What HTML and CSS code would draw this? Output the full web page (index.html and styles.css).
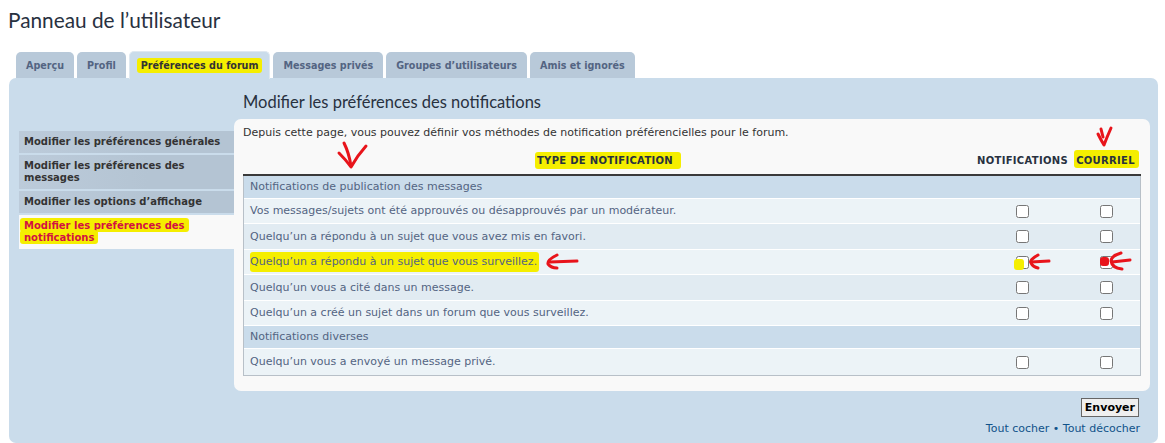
FILE: index.html
```html
<!DOCTYPE html>
<html lang="fr">
<head>
<meta charset="utf-8">
<title>Panneau de l’utilisateur</title>
<link rel="stylesheet" href="styles.css">
</head>
<body>
<h2 class="page-title">Panneau de l’utilisateur</h2>
<div class="tabs">
  <a class="tab">Aperçu</a>
  <a class="tab">Profil</a>
  <a class="tab active"><span class="hl hl-tab">Préférences du forum</span></a>
  <a class="tab">Messages privés</a>
  <a class="tab">Groupes d’utilisateurs</a>
  <a class="tab">Amis et ignorés</a>
</div>
<div class="panel">
  <ul class="nav">
    <li><a>Modifier les préférences générales</a></li>
    <li><a>Modifier les préférences des messages</a></li>
    <li><a>Modifier les options d’affichage</a></li>
    <li class="current"><a><span class="hl hl-nav">Modifier les préférences des notifications</span></a></li>
  </ul>
  <div class="main">
    <h2 class="section-title">Modifier les préférences des notifications</h2>
    <div class="box">
      <p class="intro">Depuis cette page, vous pouvez définir vos méthodes de notification préférencielles pour le forum.</p>
      <table class="table1">
        <thead>
          <tr>
            <th class="col-type"><span class="hl hl-th">TYPE DE NOTIFICATION</span></th>
            <th class="col-notif">NOTIFICATIONS</th>
            <th class="col-mail"><span class="hl hl-mail">COURRIEL</span></th>
          </tr>
        </thead>
        <tbody>
          <tr class="sec"><td colspan="3">Notifications de publication des messages</td></tr>
          <tr class="bg1"><td>Vos messages/sujets ont été approuvés ou désapprouvés par un modérateur.</td><td class="c"><input type="checkbox"></td><td class="c"><input type="checkbox"></td></tr>
          <tr class="bg2"><td>Quelqu’un a répondu à un sujet que vous avez mis en favori.</td><td class="c"><input type="checkbox"></td><td class="c"><input type="checkbox"></td></tr>
          <tr class="bg1"><td><span class="hl hl-row">Quelqu’un a répondu à un sujet que vous surveillez.</span></td><td class="c"><input type="checkbox"></td><td class="c"><input type="checkbox"></td></tr>
          <tr class="bg2"><td>Quelqu’un vous a cité dans un message.</td><td class="c"><input type="checkbox"></td><td class="c"><input type="checkbox"></td></tr>
          <tr class="bg1"><td>Quelqu’un a créé un sujet dans un forum que vous surveillez.</td><td class="c"><input type="checkbox"></td><td class="c"><input type="checkbox"></td></tr>
          <tr class="sec"><td colspan="3">Notifications diverses</td></tr>
          <tr class="bg1 last"><td>Quelqu’un vous a envoyé un message privé.</td><td class="c"><input type="checkbox"></td><td class="c"><input type="checkbox"></td></tr>
        </tbody>
      </table>
    </div>
    <div class="submit-row"><button class="btn" type="button">Envoyer</button></div>
    <div class="links"><a>Tout cocher</a> • <a>Tout décocher</a></div>
  </div>
</div>
<svg class="marks" width="1165" height="443" viewBox="0 0 1165 443">
  <rect class="blob" x="1014" y="259" width="10" height="11" rx="3"/>
  <rect class="dot" x="1100" y="257" width="9" height="9" rx="3"/>
  <g class="arrow">
    <path d="M344 143 Q349 153 351 166"/>
    <path d="M339 153 Q346 160 351 167 Q357 156 366 146"/>
    <path d="M1098 134 Q1101 140 1104 145 Q1107 137 1111 128"/>
    <path d="M1101 129 L1103 137"/>
    <path d="M577 261 L550 262"/>
    <path d="M557 255 Q547 260 548 264 Q551 268 557 268"/>
    <path d="M1049 261 L1031 262"/>
    <path d="M1038 255 Q1029 260 1031 263 Q1033 267 1038 268"/>
    <path d="M1130 260 L1112 262"/>
    <path d="M1121 253 Q1111 256 1111 261 Q1112 268 1122 269"/>
  </g>
</svg>
</body>
</html>
```
FILE: styles.css
```css
* { box-sizing: border-box; }
html, body { margin: 0; padding: 0; }
body {
  position: relative;
  width: 1165px;
  height: 443px;
  overflow: hidden;
  background: #ffffff;
  font-family: "DejaVu Sans", Verdana, sans-serif;
  color: #333333;
}
.page-title {
  margin: 0;
  padding: 8px 8px 0;
  font: normal 20.8px/24px Lato, "DejaVu Sans", sans-serif;
  color: #28313f;
}
.tabs {
  display: flex;
  align-items: flex-end;
  gap: 3px;
  height: 26px;
  margin-top: 20px;
  padding-left: 16px;
}
.tab {
  position: relative;
  display: block;
  height: 26px;
  padding: 0 10px;
  background: #b8c9d9;
  border-radius: 5px 5px 0 0;
  font: bold 9.6px/28px "DejaVu Sans", sans-serif;
  color: #536482;
  white-space: nowrap;
}
.tab.active {
  z-index: 1;
  height: 28px;
  margin-bottom: -1px;
  background: #cadceb;
  border: 1px solid #dfe8f0;
  border-bottom: 0;
  color: #333333;
  padding: 0 7px;
  line-height: 27px;
}
.hl {
  background: #f5ee00;
  border-radius: 3px;
}
.hl-tab { padding: 2px 4px; }
.hl-th { padding: 3px 8px 3px 2px; }
.hl-mail { padding: 5px 4px 2px 2px; }
.hl-row { padding: 3px 2px 4px 0; }
.hl-nav {
  padding: 2px 4px 1px 4px;
  margin-left: -4px;
  -webkit-box-decoration-break: clone;
  box-decoration-break: clone;
}
.panel {
  display: flex;
  align-items: flex-start;
  width: 1149px;
  margin-left: 9px;
  padding: 14px 8px 6px 10px;
  background: #cadceb;
  border-radius: 7px;
}
.nav {
  flex: 0 0 215px;
  list-style: none;
  margin: 39px 0 0;
  padding: 0;
}
.nav li { margin-bottom: 2px; }
.nav a {
  display: block;
  padding: 5px 3px 5px 5px;
  font: bold 10px/12px "DejaVu Sans", sans-serif;
  color: #333333;
  background: linear-gradient(to left, #b4c4d3 40%, #bccbda 100%);
}
.nav .current a {
  background: #f9f9f9;
  color: #d31141;
}
.main {
  flex: 1 1 auto;
  display: flex;
  flex-direction: column;
}
.section-title {
  margin: 0 0 7px;
  padding-left: 9px;
  font: normal 16.5px/20px Lato, "DejaVu Sans", sans-serif;
  color: #28313f;
}
.box {
  background: #f9f9f9;
  border-radius: 7px;
  padding: 7px 9px 15px;
}
.intro {
  margin: 0;
  font-size: 11px;
  line-height: 14px;
  color: #333333;
}
.table1 {
  width: 100%;
  border-collapse: collapse;
  font-size: 11px;
}
.table1 th {
  height: 35px;
  padding: 0 0 7px;
  vertical-align: bottom;
  font: bold 10px/12px "DejaVu Sans", sans-serif;
  letter-spacing: 0.3px;
  color: #28313f;
  border-bottom: 2px solid #3a3a3a;
  text-align: center;
}
.col-notif { width: 100px; }
.col-mail { width: 68px; text-align: left; }
.table1 td {
  padding: 0 6px;
  height: 25px;
  line-height: 24px;
  color: #536482;
  border-top: 1px solid #ffffff;
  border-left: 1px solid #b8c0c8;
}
.table1 td + td { border-left: 0; }
.table1 td:last-child { border-right: 1px solid #b8c0c8; }
.table1 td[colspan] { border-right: 1px solid #b8c0c8; }
.table1 .sec td { background: #cadceb; height: 23px; line-height: 22px; }
.table1 tbody tr:first-child td { border-top: 0; height: 22px; }
.table1 .bg1 td { background: #ecf3f7; }
.table1 .bg2 td { background: #e1ebf2; height: 26px; }
.table1 .last td { border-bottom: 1px solid #b8c0c8; height: 27px; }
.table1 td.c { text-align: center; padding: 0; }
.table1 td.c input { margin: 0; width: 13px; height: 13px; vertical-align: middle; }
.submit-row {
  display: flex;
  justify-content: flex-end;
  padding-right: 11px;
  margin-top: 7px;
}
.btn {
  height: 19px;
  padding: 0 3px;
  font: bold 11px/17px "DejaVu Sans", sans-serif;
  color: #000000;
  background: #efefef;
  border: 1px solid #666666;
  border-radius: 0;
}
.links {
  margin-top: 4px;
  padding-right: 10px;
  text-align: right;
  font-size: 11px;
  line-height: 16px;
  color: #105289;
}
.links a { color: #105289; }
.marks {
  position: absolute;
  left: 0;
  top: 0;
  pointer-events: none;
}
.blob { fill: #f5ee00; }
.dot { fill: #e8141b; }
.arrow path {
  fill: none;
  stroke: #e8141b;
  stroke-width: 3;
  stroke-linecap: round;
  stroke-linejoin: round;
}
```
